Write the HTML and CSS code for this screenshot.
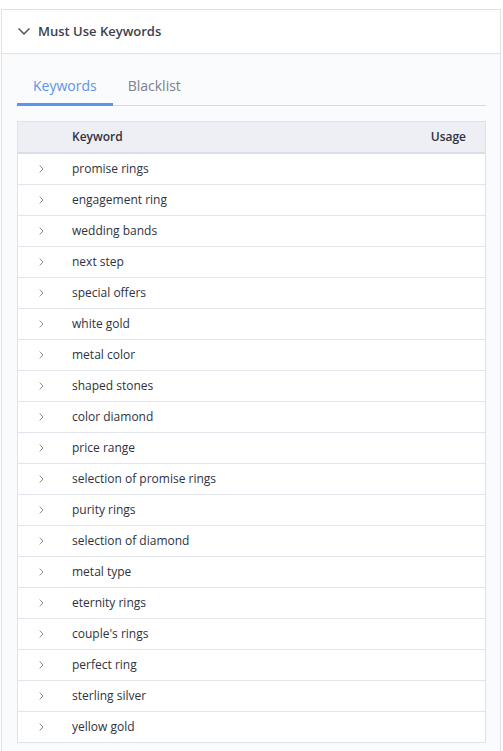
FILE: index.html
```html
<!DOCTYPE html>
<html>
<head>
<meta charset="utf-8">
<link rel="stylesheet" href="styles.css">
</head>
<body>
<div class="panel">
  <div class="panel-header">
    <svg class="caret-down" width="12" height="7" viewBox="0 0 12 7"><path d="M0.6 0.6 L6 6 L11.4 0.6" fill="none" stroke="#4a4f5e" stroke-width="1.4"/></svg>
    <span class="title">Must Use Keywords</span>
  </div>
  <div class="panel-body">
    <div class="tabs">
      <div class="tab active">Keywords</div>
      <div class="tab">Blacklist</div>
    </div>
    <div class="table">
      <div class="thead">
        <div class="c-exp"></div>
        <div class="c-kw">Keyword</div>
        <div class="c-usage">Usage</div>
      </div>
      <div class="tbody" id="rows"></div>
    </div>
  </div>
</div>
<script>
var kws = ["promise rings","engagement ring","wedding bands","next step","special offers","white gold","metal color","shaped stones","color diamond","price range","selection of promise rings","purity rings","selection of diamond","metal type","eternity rings","couple's rings","perfect ring","sterling silver","yellow gold"];
var html = "";
kws.forEach(function(k){
  html += '<div class="row"><div class="c-exp"><svg width="5" height="8" viewBox="0 0 5 8"><path d="M0.7 0.6 L4 4 L0.7 7.4" fill="none" stroke="#8a8d97" stroke-width="1"/></svg></div><div class="c-kw">' + k.replace("'", "&#39;") + '</div><div class="c-usage"></div></div>';
});
document.getElementById("rows").innerHTML = html;
</script>
</body>
</html>
```

FILE: styles.css
```css
html, body {
  margin: 0;
  padding: 0;
  background: #ffffff;
}
body {
  padding: 9px 0 0 1px;
  font-family: "Open Sans", "Liberation Sans", sans-serif;
  color: #2e3242;
}
.panel {
  width: 498px;
  border: 1px solid #e0e2ea;
  border-bottom: none;
  background: #fafbfd;
}
.panel-header {
  height: 43px;
  background: #ffffff;
  border-bottom: 1px solid #e0e2ea;
  display: flex;
  align-items: center;
  padding-left: 16px;
}
.caret-down {
  display: block;
  margin-right: 8px;
  margin-top: -1px;
}
.title {
  font-size: 13px;
  font-weight: 600;
  color: #3a3f4f;
  margin-top: -1px;
}
.panel-body {
  padding: 15px 14px 10px 15px;
}
.tabs {
  display: flex;
  border-bottom: 1px solid #d8dae3;
  height: 36px;
  margin-bottom: 15px;
}
.tab {
  padding: 0 16px 0 16px;
  font-size: 14px;
  line-height: 33px;
  color: #7b7f8e;
  margin-bottom: -1px;
}
.tab + .tab {
  padding-left: 15px;
}
.tab.active {
  color: #5b93ef;
  border-bottom: 3px solid #5b93ef;
  height: 34px;
}
.table {
  border: 1px solid #e0e2ea;
  background: #ffffff;
}
.thead {
  display: flex;
  align-items: center;
  height: 30px;
  background: #eeeff5;
  border-bottom: 2px solid #dcdde6;
  font-size: 12px;
  font-weight: 600;
  color: #2e3242;
}
.row {
  display: flex;
  align-items: center;
  height: 30px;
  border-bottom: 1px solid #e4e5ec;
  font-size: 12px;
  color: #2e3242;
}
.row:last-child {
  border-bottom: none;
}
.c-exp {
  width: 54px;
  flex: none;
  display: flex;
  justify-content: flex-start;
  padding-left: 21px;
  box-sizing: border-box;
}
.c-exp svg {
  display: block;
}
.c-kw {
  flex: 1;
  margin-bottom: 2px;
}
.c-usage {
  padding-right: 19px;
  margin-bottom: 2px;
}
```
